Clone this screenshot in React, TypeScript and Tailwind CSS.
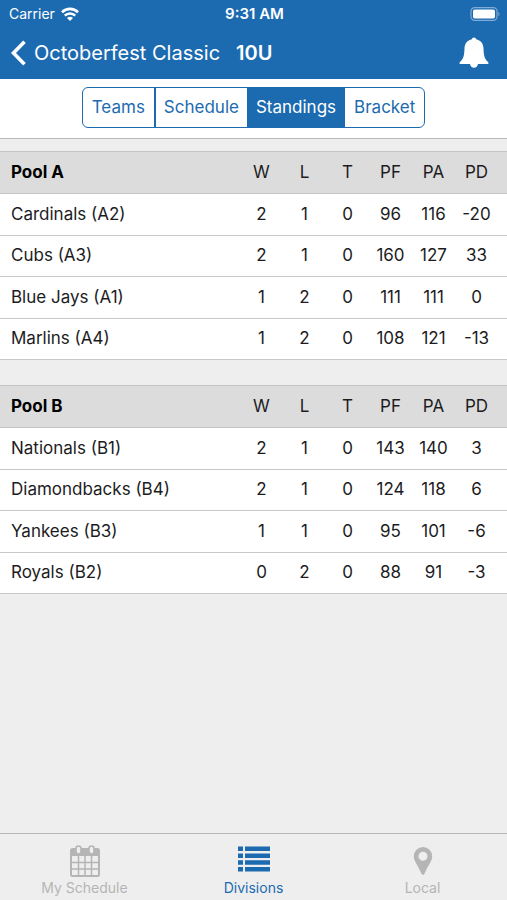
import React from 'react';

type Team = { name: string; stats: number[] };
type Pool = { name: string; teams: Team[] };

const columns = ['W', 'L', 'T', 'PF', 'PA', 'PD'];

const pools: Pool[] = [
  {
    name: 'Pool A',
    teams: [
      { name: 'Cardinals (A2)', stats: [2, 1, 0, 96, 116, -20] },
      { name: 'Cubs (A3)', stats: [2, 1, 0, 160, 127, 33] },
      { name: 'Blue Jays (A1)', stats: [1, 2, 0, 111, 111, 0] },
      { name: 'Marlins (A4)', stats: [1, 2, 0, 108, 121, -13] },
    ],
  },
  {
    name: 'Pool B',
    teams: [
      { name: 'Nationals (B1)', stats: [2, 1, 0, 143, 140, 3] },
      { name: 'Diamondbacks (B4)', stats: [2, 1, 0, 124, 118, 6] },
      { name: 'Yankees (B3)', stats: [1, 1, 0, 95, 101, -6] },
      { name: 'Royals (B2)', stats: [0, 2, 0, 88, 91, -3] },
    ],
  },
];

function StatusBar() {
  return (
    <div className="grid h-7 grid-cols-3 items-center pl-[9px] pr-[7px] text-sm">
      <div className="flex items-center gap-1.5">
        <span>Carrier</span>
        <svg className="h-[14px] w-[18px]" viewBox="0 0 18 14" fill="none" stroke="currentColor" strokeWidth="2.6">
          <path d="M1 5.2a11.4 11.4 0 0 1 16 0" />
          <path d="M3.8 8.7a7.3 7.3 0 0 1 10.4 0" />
          <path d="M9 14 6 11a4.2 4.2 0 0 1 6 0z" fill="currentColor" stroke="none" />
        </svg>
      </div>
      <span className="text-center text-[15px] font-semibold">9:31 AM</span>
      <svg className="h-[14px] w-[30px] justify-self-end" viewBox="0 0 30 14" fill="none">
        <rect x="1" y="0.7" width="26" height="12.6" rx="3.6" stroke="#7fabd4" strokeWidth="1.2" />
        <rect x="3" y="2.4" width="22" height="9.2" rx="1.8" fill="#fff" />
        <path d="M28.4 4.8c1.5.7 1.5 3.7 0 4.4z" fill="#7fabd4" />
      </svg>
    </div>
  );
}

function NavBar() {
  return (
    <div className="flex h-[51px] items-center justify-between pb-0.5 pl-2.5 pr-[18px]">
      <button className="flex items-center text-xl">
        <svg className="mr-2 h-[26px] w-4" viewBox="0 0 16 26" fill="none" stroke="currentColor" strokeWidth="3.6">
          <path d="M14.5 1.8 3.5 13l11 11.2" />
        </svg>
        <span className="mr-4">Octoberfest Classic</span>
        <span className="font-semibold">10U</span>
      </button>
      <button aria-label="Notifications">
        <svg className="h-[31px] w-[30px]" viewBox="0 0 30 31" fill="currentColor">
          <path d="M15 .5c1.2 0 1.900.8 2.100 1.800 4.500 1 7.200 4.300 7.400 9 .2 7.200 1 10.800 4.500 13.600 1 .8.7 2-.4 2H19c-.4 2.300-1.900 3.900-4 3.900s-3.600-1.600-4-3.900H1.400c-1.100 0-1.400-1.200-.4-2 3.500-2.800 4.300-6.400 4.500-13.600.2-4.700 2.900-8 7.400-9 .2-1 .9-1.800 2.100-1.800z" />
        </svg>
      </button>
    </div>
  );
}

function Segments() {
  return (
    <div className="flex h-[60px] justify-center border-b border-[#b9b9be] bg-white pt-2">
      <div className="flex h-[41px] overflow-hidden rounded-md border border-[#1c6bb0] text-[17px] text-[#1c6bb0]">
        <button className="border-r-2 border-[#1c6bb0] px-[9px]">Teams</button>
        <button className="px-2">Schedule</button>
        <button className="bg-[#1c6bb0] px-[9px] text-white">Standings</button>
        <button className="px-[9px]">Bracket</button>
      </div>
    </div>
  );
}

function PoolTable({ pool }: { pool: Pool }) {
  return (
    <table className="w-full table-fixed border-collapse border-y border-[#c4c4c6] bg-white text-[17px] text-[#1c1c1e]">
      <thead>
        <tr className="h-[42px] border-b border-[#c4c4c6] bg-[#dcdcdc]">
          <th className="pl-[11px] text-left font-bold text-black">{pool.name}</th>
          {columns.map((c) => (
            <th key={c} className="w-[43px] font-normal">{c}</th>
          ))}
          <td className="w-[9px]" />
        </tr>
      </thead>
      <tbody>
        {pool.teams.map((team) => (
          <tr key={team.name} className="border-b border-[#c8c8ca] odd:h-[42px] even:h-[41px]">
            <td className="pl-[11px]">{team.name}</td>
            {team.stats.map((value, i) => (
              <td key={columns[i]} className="text-center">{value}</td>
            ))}
            <td />
          </tr>
        ))}
      </tbody>
    </table>
  );
}

function TabBar() {
  return (
    <nav className="grid h-[67px] grid-cols-3 border-t border-[#b5b5b5] bg-[#eee] text-sm text-[#b5b5b5]">
      <a href="#schedule" className="flex flex-col items-center pt-[11px]">
        <svg className="h-[33px] w-[30px]" viewBox="0 0 30 33" fill="none" stroke="currentColor">
          <rect x="1" y="4" width="28" height="27" rx="1.5" strokeWidth="2" />
          <path d="M1 4h28v7H1z" fill="currentColor" stroke="none" />
          <path d="M8.5 11v20M15 11v20M21.5 11v20M1 17.5h28M1 24h28" strokeWidth="1.5" />
          <rect x="6" y="1" width="5" height="8" rx="2.5" fill="#eee" strokeWidth="1.6" />
          <rect x="19" y="1" width="5" height="8" rx="2.5" fill="#eee" strokeWidth="1.6" />
        </svg>
        <span>My Schedule</span>
      </a>
      <a href="#divisions" className="flex flex-col items-center pt-[11px] text-[#1c6bb0]">
        <svg className="h-[33px] w-8" viewBox="0 0 32 33" fill="currentColor">
          <path d="M0 1.5h5V6H0zM7 1.5h25V6H7zM0 8.500h5V13H0zM7 8.500h25V13H7zM0 15.200h5v4.600H0zM7 15.200h25v4.600H7zM0 22h5v4.600H0zM7 22h25v4.600H7z" />
        </svg>
        <span>Divisions</span>
      </a>
      <a href="#local" className="flex flex-col items-center pt-[11px]">
        <svg className="h-[33px] w-5" viewBox="0 0 20 33" fill="currentColor" fillRule="evenodd">
          <path d="M10 2a9.200 9.200 0 0 1 9.200 9.200c0 5-4.200 9-7.600 17.300-.7 1.700-2.500 1.700-3.200 0C5 20.200.8 16.200.8 11.200A9.200 9.200 0 0 1 10 2zm0 4.800a4.500 4.500 0 1 0 0 9 4.500 4.500 0 0 0 0-9z" />
        </svg>
        <span>Local</span>
      </a>
    </nav>
  );
}

export default function App() {
  return (
    <div className="flex min-h-screen flex-col bg-[#eee] font-['Inter',sans-serif]">
      <header className="bg-[#1c6bb0] text-white">
        <StatusBar />
        <NavBar />
      </header>
      <Segments />
      <main className="flex flex-1 flex-col gap-[25px] pt-3">
        {pools.map((pool) => (
          <PoolTable key={pool.name} pool={pool} />
        ))}
      </main>
      <TabBar />
    </div>
  );
}
